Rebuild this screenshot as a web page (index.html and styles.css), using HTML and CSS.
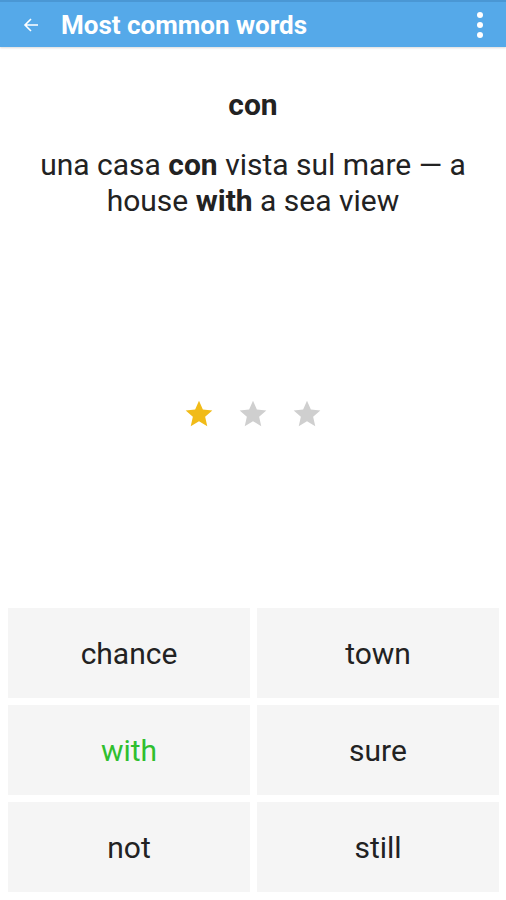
FILE: index.html
```html
<!DOCTYPE html>
<html lang="en">
<head>
    <meta charset="UTF-8">
    <meta name="viewport" content="width=device-width, initial-scale=1.0">
    <title>Most common words</title>
    <link rel="stylesheet" href="styles.css">
</head>
<body>
    <div class="app">

        <div class="toolbar">
            <svg class="back" width="18" height="18" viewBox="0 0 18 18">
                <path d="M16 9H3M9 3L3 9l6 6" fill="none" stroke="#fff" stroke-width="1.6"/>
            </svg>
            <h1 class="title">Most common words</h1>
            <svg class="menu" width="8" height="28" viewBox="0 0 8 28">
                <circle cx="4" cy="4" r="3" fill="#fff"/>
                <circle cx="4" cy="14" r="3" fill="#fff"/>
                <circle cx="4" cy="24" r="3" fill="#fff"/>
            </svg>
        </div>

        <div class="card">
            <div class="word">con</div>
            <p class="example">una casa <b>con</b> vista sul mare — a house <b>with</b> a sea view</p>
        </div>

        <div class="stars">
            <svg class="star on" viewBox="0 0 24 24"><path d="M12 2l2.9 6.6 7.1.7-5.4 4.8 1.6 7L12 17.4 5.8 21.1l1.6-7L2 9.3l7.1-.7z"/></svg>
            <svg class="star" viewBox="0 0 24 24"><path d="M12 2l2.9 6.6 7.1.7-5.4 4.8 1.6 7L12 17.4 5.8 21.1l1.6-7L2 9.3l7.1-.7z"/></svg>
            <svg class="star" viewBox="0 0 24 24"><path d="M12 2l2.9 6.6 7.1.7-5.4 4.8 1.6 7L12 17.4 5.8 21.1l1.6-7L2 9.3l7.1-.7z"/></svg>
        </div>

        <div class="answers">
            <div class="answer">chance</div>
            <div class="answer">town</div>
            <div class="answer correct">with</div>
            <div class="answer">sure</div>
            <div class="answer">not</div>
            <div class="answer">still</div>
        </div>

    </div>
</body>
</html>
```

FILE: styles.css
```css
body {
    margin: 0;
    font-family: Roboto, "Noto Sans", sans-serif;
    background: #fff;
    color: #222;
}

.app {
    height: 900px;
    display: flex;
    flex-direction: column;
}

.toolbar {
    height: 47px;
    background-color: #55a9e9;
    border-top: 2px solid #4a97d4;
    box-sizing: border-box;
    display: flex;
    align-items: center;
    padding: 0 22px 0 22px;
    box-shadow: 0 1px 2px rgba(0, 0, 0, 0.15);
}

.back {
    margin-right: 21px;
}

.title {
    flex: 1;
    margin: 0;
    color: #fff;
    font-size: 26px;
    font-weight: bold;
}

.card {
    text-align: center;
    padding: 0 30px;
}

.word {
    margin-top: 40px;
    font-size: 30px;
    line-height: 36px;
    font-weight: bold;
}

.example {
    margin: 24px 0 0;
    font-size: 30px;
    line-height: 36px;
}

.stars {
    display: flex;
    justify-content: center;
    gap: 22px;
    margin-top: 179px;
}

.star {
    width: 32px;
    height: 32px;
    fill: #cfcfcf;
}

.star.on {
    fill: #f1bb18;
}

.answers {
    margin-top: auto;
    padding: 0 7px 8px 8px;
    display: grid;
    grid-template-columns: 1fr 1fr;
    grid-auto-rows: 90px;
    gap: 7px;
}

.answer {
    background-color: #f5f5f5;
    display: flex;
    align-items: center;
    justify-content: center;
    font-size: 30px;
    color: #222;
}

.answer.correct {
    color: #2fbf2f;
}
```
